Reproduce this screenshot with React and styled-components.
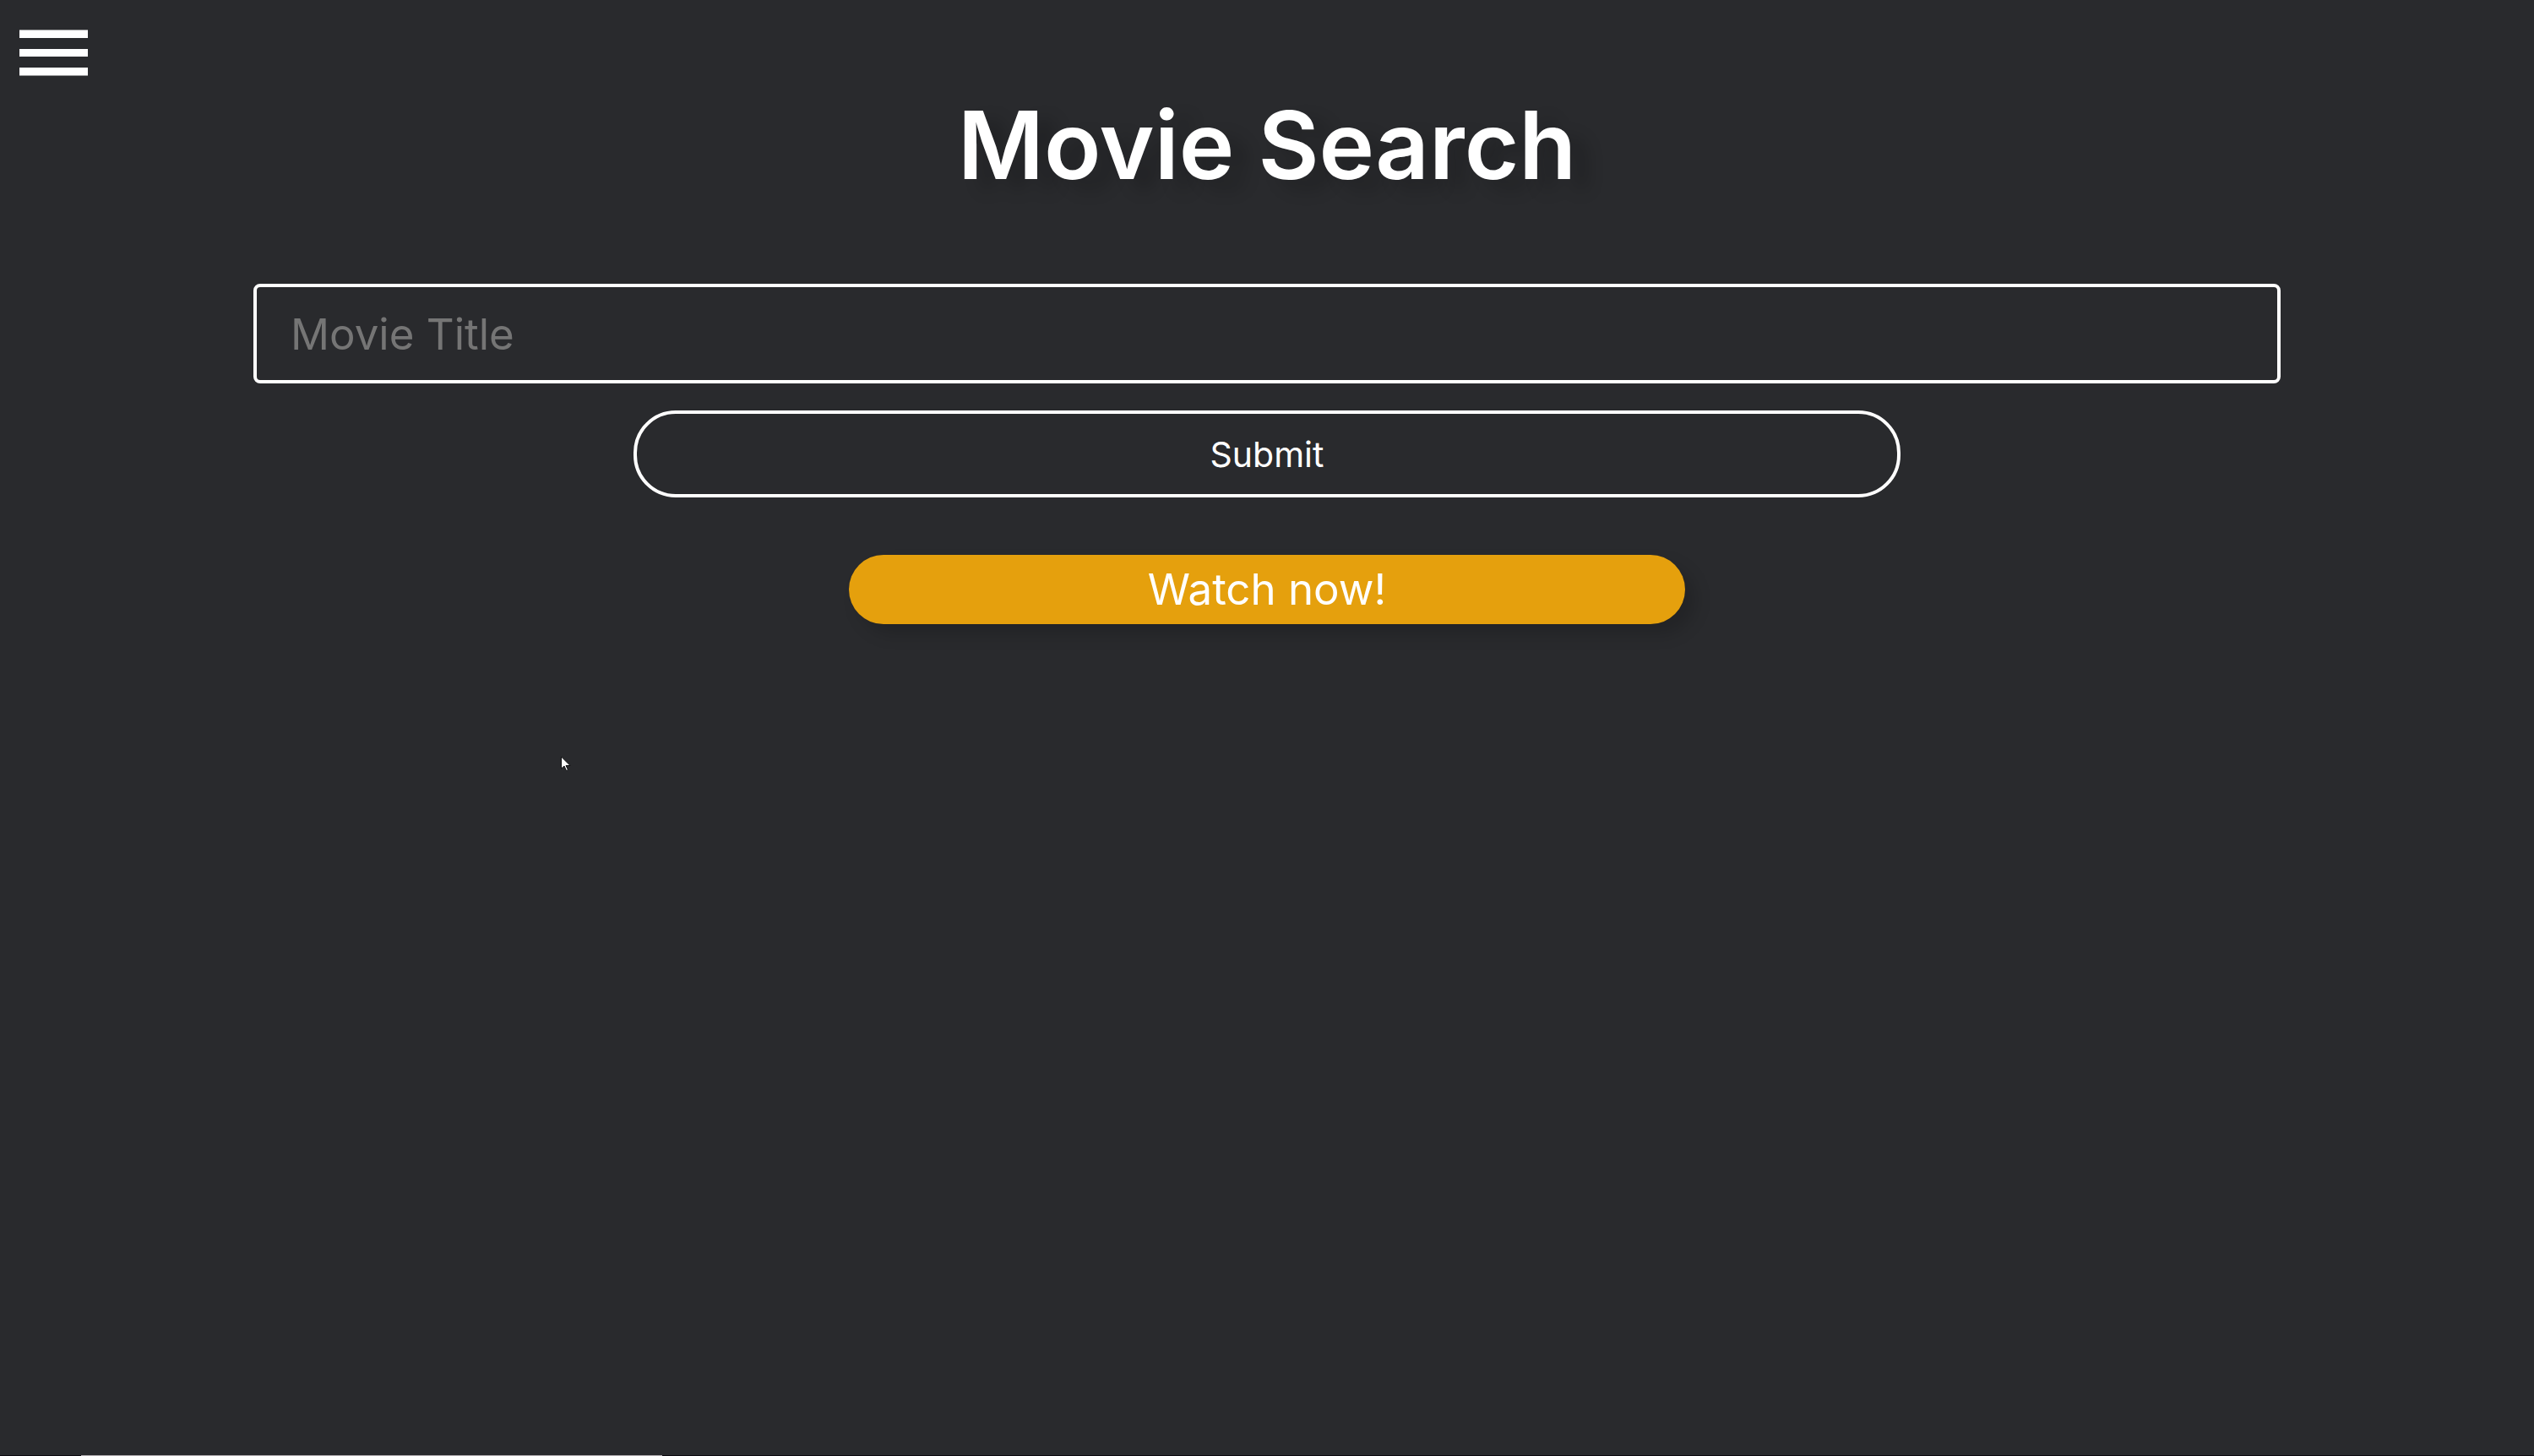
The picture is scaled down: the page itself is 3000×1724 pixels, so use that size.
import React, { useState } from "react";
import styled, { createGlobalStyle } from "styled-components";

const GlobalStyle = createGlobalStyle`
  * {
    box-sizing: border-box;
  }

  body {
    margin: 0;
    background: #292a2d;
    color: #ffffff;
    font-family: Inter, "Liberation Sans", sans-serif;
  }
`;

const Page = styled.div`
  position: relative;
  display: flex;
  flex-direction: column;
  min-height: 100vh;
`;

const TopBar = styled.header`
  display: flex;
  height: 96px;
  padding: 32px 20px 0;
`;

const MenuButton = styled.button`
  display: flex;
  align-items: flex-start;
  padding: 3px;
  border: 0;
  background: transparent;
  color: inherit;
  cursor: pointer;
`;

const Main = styled.main`
  display: flex;
  flex: 1;
  flex-direction: column;
  align-items: center;
`;

const Title = styled.h1`
  margin: 0 0 88px;
  font-size: 111px;
  font-weight: 600;
  line-height: 152px;
  text-shadow: 20px 12px 20px rgba(0, 0, 0, 0.2);
`;

const SearchForm = styled.form`
  display: flex;
  flex-direction: column;
  align-items: center;
  gap: 32px;
  width: 100%;
`;

const TitleInput = styled.input`
  width: 80%;
  height: 118px;
  padding: 0 40px;
  border: 4px solid #ffffff;
  border-radius: 8px;
  outline: 0;
  background: transparent;
  color: #ffffff;
  font: inherit;
  font-size: 51px;

  &::placeholder {
    color: #757575;
    opacity: 1;
  }
`;

const SubmitButton = styled.button`
  width: 50%;
  height: 103px;
  border: 4px solid #ffffff;
  border-radius: 50px;
  background: transparent;
  color: #ffffff;
  font: inherit;
  font-size: 41px;
  cursor: pointer;
`;

const WatchLink = styled.a`
  width: 33%;
  margin-top: 68px;
  border-radius: 41px;
  background: #e5a00d;
  box-shadow: 12px 12px 20px rgba(0, 0, 0, 0.16);
  color: #ffffff;
  font-size: 51px;
  line-height: 82px;
  text-align: center;
  text-decoration: none;
`;

const BottomEdge = styled.footer`
  height: 1px;
  padding-left: 96px;
  background: #0c0910;
`;

const EdgeSegment = styled.div`
  width: 688px;
  height: 1px;
  background: #b4b0b4;
`;

const Pointer = styled.svg`
  position: absolute;
  top: 895px;
  left: 664px;
  pointer-events: none;
`;

export default function App() {
  const [title, setTitle] = useState("");

  return (
    <Page>
      <GlobalStyle />
      <TopBar>
        <MenuButton type="button" aria-label="Open menu">
          <svg width="81" height="55" viewBox="0 0 81 55" fill="currentColor" aria-hidden="true">
            <path d="M0 .5h81V10H0zM0 23h81v9H0zM0 45h81v9.5H0z" />
          </svg>
        </MenuButton>
      </TopBar>
      <Main>
        <Title>Movie Search</Title>
        <SearchForm onSubmit={(event) => event.preventDefault()}>
          <TitleInput
            type="text"
            aria-label="Movie Title"
            placeholder="Movie Title"
            value={title}
            onChange={(event) => setTitle(event.target.value)}
          />
          <SubmitButton type="submit">Submit</SubmitButton>
        </SearchForm>
        <WatchLink href="#watch">Watch now!</WatchLink>
      </Main>
      <BottomEdge>
        <EdgeSegment />
      </BottomEdge>
      <Pointer width="12" height="19" viewBox="0 0 12 19" aria-hidden="true">
        <path
          d="M.5 1v14l3.5-3 2.5 5.5 2-1-2.5-5h5z"
          fill="#ffffff"
          stroke="#111113"
          strokeWidth="1"
        />
      </Pointer>
    </Page>
  );
}
